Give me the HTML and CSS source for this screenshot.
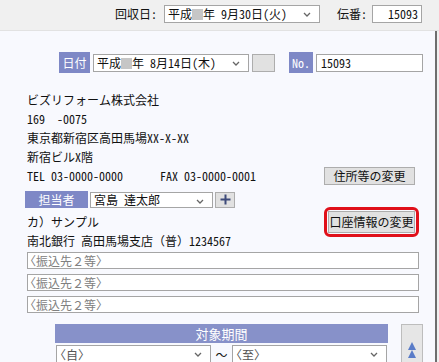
FILE: index.html
```html
<!DOCTYPE html>
<html lang="ja">
<head>
<meta charset="utf-8">
<link rel="stylesheet" href="styles.css">
</head>
<body>
<div class="top">
  <span class="toplbl">回収日:</span>
  <div class="sel s-top"><span class="val">平成<i class="blur"></i>年 9月30日(火)</span><svg class="chev" width="8" height="5" viewBox="0 0 8 5"><path d="M1 1 L4 4 L7 1" fill="none" stroke="#666" stroke-width="1.3"/></svg></div>
  <span class="toplbl t2">伝番:</span>
  <div class="inp i-top">15093</div>
</div>
<div class="panel">
  <div class="row r-date">
    <span class="tag t-date">日付</span>
    <div class="sel s-date"><span class="val">平成<i class="blur"></i>年 8月14日(木)</span><svg class="chev" width="8" height="5" viewBox="0 0 8 5"><path d="M1 1 L4 4 L7 1" fill="none" stroke="#666" stroke-width="1.3"/></svg></div>
    <div class="btn b-sq"></div>
    <span class="tag t-no">No.</span>
    <div class="inp i-no">15093</div>
  </div>
  <div class="lines">
    <div class="line">ビズリフォーム株式会社</div>
    <div class="line">169&nbsp;&nbsp;-0075</div>
    <div class="line">東京都新宿区高田馬場XX-X-XX</div>
    <div class="line">新宿ビルX階</div>
    <div class="line telrow"><span class="tel">TEL 03-0000-0000</span><span class="fax">FAX 03-0000-0001</span><div class="btn b-addr">住所等の変更</div></div>
  </div>
  <div class="row r-staff">
    <span class="tag t-staff">担当者</span>
    <div class="sel s-staff"><span class="val dark">宮島 達太郎</span><svg class="chev" width="8" height="5" viewBox="0 0 8 5"><path d="M1 1 L4 4 L7 1" fill="none" stroke="#666" stroke-width="1.3"/></svg></div>
    <div class="btn b-plus"><svg width="11" height="11" viewBox="0 0 11 11"><path d="M5.5 0.5 V10.5 M0.5 5.5 H10.5" stroke="#3d4a7a" stroke-width="2"/></svg></div>
  </div>
  <div class="row r-kana">
    <span class="kana">カ）サンプル</span>
    <div class="redwrap"><div class="btn b-acct">口座情報の変更</div></div>
  </div>
  <div class="line bank">南北銀行 高田馬場支店（普）1234567</div>
  <div class="fields">
    <div class="inp wide"><span class="half">〈振込先２等〉</span></div>
    <div class="inp wide"><span class="half">〈振込先２等〉</span></div>
    <div class="inp wide"><span class="half">〈振込先２等〉</span></div>
  </div>
  <div class="period">
    <div class="pmain">
      <div class="phead">対象期間</div>
      <div class="prow">
        <div class="sel s-per"><span class="val grey half">〈自〉</span><svg class="chev" width="8" height="5" viewBox="0 0 8 5"><path d="M1 1 L4 4 L7 1" fill="none" stroke="#666" stroke-width="1.3"/></svg></div>
        <span class="tilde">〜</span>
        <div class="sel s-per"><span class="val grey half">〈至〉</span><svg class="chev" width="8" height="5" viewBox="0 0 8 5"><path d="M1 1 L4 4 L7 1" fill="none" stroke="#666" stroke-width="1.3"/></svg></div>
      </div>
    </div>
    <div class="upbtn"><svg width="8" height="20" viewBox="0 0 8 20"><path d="M4 0 L8 8 L0 8 Z M4 8 L8 16 L0 16 Z" fill="#5a7cc8"/></svg></div>
  </div>
</div>
</body>
</html>
```

FILE: styles.css
```css
* { box-sizing: border-box; }
html, body { margin: 0; padding: 0; }
body {
  width: 439px;
  height: 362px;
  overflow: hidden;
  background: #f0f0f0;
  font-family: "Noto Sans Mono CJK JP", "Noto Sans CJK JP", "DejaVu Sans", sans-serif;
  font-size: 12px;
  color: #111;
  line-height: 16px;
}
.top {
  height: 31px;
  border-bottom: 1px solid #e2e2e2;
  display: flex;
  align-items: center;
  padding-left: 115px;
  padding-bottom: 2px;
}
.toplbl { width: 49px; }
.t2 { width: 35px; margin-left: 17px; }
.sel {
  position: relative;
  height: 18px;
  background: #fff;
  border: 1px solid #a5a5a5;
  display: flex;
  align-items: center;
  padding-left: 3px;
}
.sel .chev { position: absolute; right: 8px; top: 6px; }
.val { white-space: nowrap; }
.half { font-feature-settings: "halt" 1; }
.blur {
  display: inline-block;
  width: 11px;
  height: 11px;
  background: #c6c6c6;
  vertical-align: -1px;
}
.s-top { width: 156px; }
.inp {
  height: 18px;
  background: #fff;
  border: 1px solid #a5a5a5;
  padding: 0 4px;
  display: flex;
  align-items: center;
}
.i-top { width: 50px; justify-content: flex-end; padding-right: 3px; }
.panel {
  height: 331px;
  width: 437px;
  background: #f8f9fe;
  border-right: 2px solid #6e6e6e;
}
.row { display: flex; align-items: center; }
.r-date { padding-left: 59px; padding-top: 21px; }
.tag {
  background: #7e88c6;
  color: #fff;
  display: flex;
  align-items: center;
  justify-content: center;
}
.t-date { width: 31px; height: 21px; margin-right: 3px; }
.s-date { width: 156px; }
.btn {
  background: #e1e1e1;
  border: 1px solid #adadad;
  display: flex;
  align-items: center;
  justify-content: center;
  white-space: nowrap;
}
.b-sq { width: 23px; height: 18px; margin-left: 3px; }
.t-no { width: 24px; height: 21px; margin-left: 14px; margin-right: 3px; }
.i-no { width: 107px; }
.lines { padding-left: 27px; margin-top: 17px; }
.line { line-height: 19px; height: 19px; white-space: nowrap; }
.telrow { display: flex; align-items: center; }
.tel { width: 133px; }
.fax { width: 164px; }
.b-addr { width: 91px; height: 18px; }
.r-staff { padding-left: 25px; margin-top: 6px; height: 17px; }
.t-staff { width: 63px; height: 17px; margin-right: 2px; }
.s-staff { width: 123px; height: 16px; }
.b-plus { width: 20px; height: 16px; margin-left: 2px; }
.r-kana {
  padding-left: 27px;
  margin-top: 4px;
  height: 19px;
  justify-content: space-between;
  width: 419px;
}
.redwrap {
  border: 3px solid #e0101a;
  border-radius: 6px;
  padding: 1px;
  height: 30px;
  width: 95px;
}
.b-acct { width: 100%; height: 100%; }
.bank { padding-left: 27px; }
.fields {
  padding-left: 27px;
  margin-top: 2px;
  display: flex;
  flex-direction: column;
  gap: 5px;
}
.wide { width: 392px; height: 17px; color: #808080; padding-left: 2px; }
.period {
  display: flex;
  margin-top: 11px;
  padding-left: 55px;
}
.pmain { width: 333px; }
.phead {
  height: 19px;
  background: #8791c9;
  color: #fff;
  display: flex;
  align-items: center;
  justify-content: center;
  font-size: 13px;
}
.prow { display: flex; align-items: center; margin-top: 2px; padding-left: 1px; }
.s-per { width: 155px; height: 20px; }
.grey { color: #555; }
.tilde { width: 21px; text-align: center; }
.upbtn {
  width: 22px;
  height: 45px;
  margin-left: 13px;
  background: #e6e6e6;
  border: 1px solid #bdbdbd;
  display: flex;
  justify-content: center;
  padding-top: 17px;
}
```
